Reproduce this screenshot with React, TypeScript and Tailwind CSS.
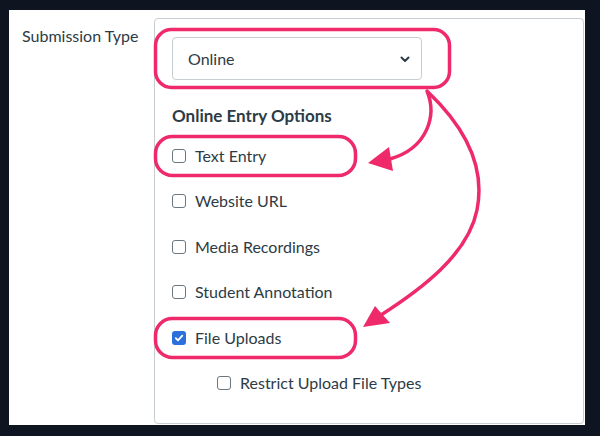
import * as React from "react";

const options = [
	{ label: "Text Entry", checked: false },
	{ label: "Website URL", checked: false },
	{ label: "Media Recordings", checked: false },
	{ label: "Student Annotation", checked: false },
	{ label: "File Uploads", checked: true },
];

const Box = ({ checked }: { checked: boolean }) =>
	checked ? (
		<span className="flex h-[14px] w-[14px] items-center justify-center rounded-[3px] bg-[#2a6fdb]">
			<svg width="10" height="10" viewBox="0 0 10 10">
				<path d="M1.8 5.2 L4 7.4 L8.3 2.6" fill="none" stroke="#fff" strokeWidth="1.8" strokeLinecap="round" strokeLinejoin="round" />
			</svg>
		</span>
	) : (
		<span className="block h-[14px] w-[14px] rounded-[3px] border-[1.5px] border-[#6b7780] bg-white" />
	);

const Annotations = () => (
	<svg className="pointer-events-none absolute left-0 top-0" width="600" height="436" viewBox="0 0 600 436">
		<g fill="none" stroke="#ee2a6b" strokeWidth="3.5">
			<rect x="155.5" y="29.5" width="294" height="58" rx="16" />
			<rect x="155.5" y="136.5" width="200" height="39" rx="17" />
			<rect x="155.5" y="318.5" width="200" height="39" rx="17" />
			<path d="M427 91 C437 115 428 148 390 159" strokeLinecap="round" />
			<path d="M428 92 C468 130 485 170 477 210 C468 255 420 290 381 315" strokeLinecap="round" />
		</g>
		<g fill="#ee2a6b">
			<polygon points="368,163 389,147 393,171" />
			<polygon points="363,327 375,306 390,323" />
		</g>
	</svg>
);

export default function App() {
	return (
		<div className="relative h-[436px] w-[600px] bg-[#0f1520] pt-[10px] pl-[9px] pr-[15px] pb-[11px] font-['Lato','Liberation_Sans',sans-serif] text-[#2d3b45]">
			<div className="flex h-full bg-white">
				<div className="w-[145px] shrink-0 pl-[13px] pt-[16px] text-[16px] leading-5">Submission Type</div>
				<div className="mt-[8px] h-[406px] w-[430px] rounded-[4px] border border-[#c7cdd1] pl-[17px] pt-[18px]">
					<div className="flex h-[43px] w-[250px] items-center justify-between rounded-[4px] border border-[#c7cdd1] pl-[15px] pr-[10px] text-[16px]">
						<span>Online</span>
						<svg width="12" height="12" viewBox="0 0 12 12">
							<path d="M2.5 4.5 L6 8 L9.5 4.5" fill="none" stroke="#2d3b45" strokeWidth="2" strokeLinecap="round" strokeLinejoin="round" />
						</svg>
					</div>
					<div className="mt-[26px] text-[17px] font-bold leading-5">Online Entry Options</div>
					<div className="mt-[7px] flex flex-col">
						{options.map((o) => (
							<div key={o.label} className="flex h-[45.5px] items-center gap-[9px] text-[16px]">
								<Box checked={o.checked} />
								<span>{o.label}</span>
							</div>
						))}
						<div className="flex h-[45.5px] items-center gap-[9px] pl-[45px] text-[16px]">
							<Box checked={false} />
							<span>Restrict Upload File Types</span>
						</div>
					</div>
				</div>
			</div>
			<Annotations />
		</div>
	);
}
